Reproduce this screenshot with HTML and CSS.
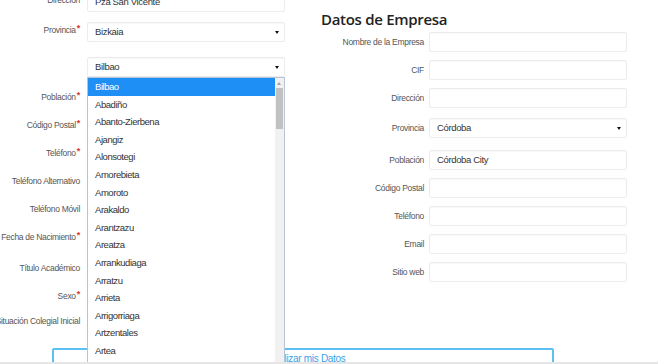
FILE: index.html
```html
<!DOCTYPE html>
<html>
    <head>
        <meta charset='UTF-8'>
        <link rel="stylesheet" href="styles.css">
    </head>
    <body>
        <div class="page">
            <div class="columns">
                <div class="col col-left">
                    <div class="row row-first">
                        <div class="label">Dirección</div>
                        <div class="control">Pza San Vicente</div>
                    </div>
                    <div class="row row-tall">
                        <div class="label">Provincia<span class="req">*</span></div>
                        <div class="control select">Bizkaia</div>
                    </div>
                    <div class="row row-mid">
                        <div class="label"></div>
                        <div class="control select">Bilbao</div>
                    </div>
                    <div class="row">
                        <div class="label">Población<span class="req">*</span></div>
                        <div class="control"></div>
                    </div>
                    <div class="row">
                        <div class="label">Código Postal<span class="req">*</span></div>
                        <div class="control"></div>
                    </div>
                    <div class="row">
                        <div class="label">Teléfono<span class="req">*</span></div>
                        <div class="control"></div>
                    </div>
                    <div class="row">
                        <div class="label">Teléfono Alternativo</div>
                        <div class="control"></div>
                    </div>
                    <div class="row">
                        <div class="label">Teléfono Móvil</div>
                        <div class="control"></div>
                    </div>
                    <div class="row row-31">
                        <div class="label">Fecha de Nacimiento<span class="req">*</span></div>
                        <div class="control"></div>
                    </div>
                    <div class="row">
                        <div class="label">Título Académico</div>
                        <div class="control"></div>
                    </div>
                    <div class="row row-25">
                        <div class="label">Sexo<span class="req">*</span></div>
                        <div class="control"></div>
                    </div>
                    <div class="row">
                        <div class="label">Situación Colegial Inicial</div>
                        <div class="control"></div>
                    </div>
                </div>

                <div class="col col-right">
                    <h2>Datos de Empresa</h2>
                    <div class="row">
                        <div class="label">Nombre de la Empresa</div>
                        <div class="control"></div>
                    </div>
                    <div class="row">
                        <div class="label">CIF</div>
                        <div class="control"></div>
                    </div>
                    <div class="row row-30">
                        <div class="label">Dirección</div>
                        <div class="control"></div>
                    </div>
                    <div class="row row-32">
                        <div class="label">Provincia</div>
                        <div class="control select">Córdoba</div>
                    </div>
                    <div class="row">
                        <div class="label">Población</div>
                        <div class="control">Córdoba City</div>
                    </div>
                    <div class="row">
                        <div class="label">Código Postal</div>
                        <div class="control"></div>
                    </div>
                    <div class="row">
                        <div class="label">Teléfono</div>
                        <div class="control"></div>
                    </div>
                    <div class="row">
                        <div class="label">Email</div>
                        <div class="control"></div>
                    </div>
                    <div class="row">
                        <div class="label">Sitio web</div>
                        <div class="control"></div>
                    </div>
                </div>
            </div>

            <div class="btn">Actualizar mis Datos</div>

            <div class="dropdown">
                <ul class="options">
                    <li class="selected">Bilbao</li>
                    <li>Abadiño</li>
                    <li>Abanto-Zierbena</li>
                    <li>Ajangiz</li>
                    <li>Alonsotegi</li>
                    <li>Amorebieta</li>
                    <li>Amoroto</li>
                    <li>Arakaldo</li>
                    <li>Arantzazu</li>
                    <li>Areatza</li>
                    <li>Arrankudiaga</li>
                    <li>Arratzu</li>
                    <li>Arrieta</li>
                    <li>Arrigorriaga</li>
                    <li>Artzentales</li>
                    <li>Artea</li>
                    <li>Atxondo</li>
                </ul>
                <div class="scrollbar">
                    <div class="arrow"></div>
                    <div class="thumb"></div>
                </div>
            </div>
        </div>
        <div class="bottom-edge"></div>
    </body>
</html>
```

FILE: styles.css
```css
html, body {
    width: 100%;
    height: 100%;
    overflow: hidden;
}

body {
    margin: 0;
    padding: 0;
    background: #fff;
    font-family: "Liberation Sans", Arial, sans-serif;
    color: #555;
}

.page {
    position: relative;
}

.columns {
    display: flex;
    gap: 36px;
}

.col-left {
    margin-top: -12px;
}

.col-right {
    padding-top: 10px;
}

h2 {
    margin: 0;
    height: 18px;
    font-family: "Open Sans", sans-serif;
    font-weight: 600;
    font-size: 15px;
    line-height: 18px;
    letter-spacing: -0.3px;
    color: #222;
}

.row {
    display: flex;
    align-items: flex-start;
    height: 28px;
    padding-top: 4px;
    box-sizing: border-box;
}

.row-first { height: 30px; }
.row-tall { height: 35px; }
.row-mid { height: 32px; }
.row-25 { height: 25px; }
.row-30 { height: 30px; }
.row-31 { height: 31px; }
.row-32 { height: 32px; }

.label {
    flex: none;
    display: flex;
    justify-content: flex-end;
    margin-top: 2px;
    font-size: 8.5px;
    line-height: 12px;
    letter-spacing: -0.3px;
    white-space: nowrap;
}

.col-left .label {
    width: 80px;
    margin-right: 7px;
}

.col-right .label {
    width: 103px;
    margin-right: 5px;
    margin-top: 4px;
}

.label .req {
    color: #e0322d;
    font-size: 9px;
    font-weight: bold;
    line-height: 8px;
    margin-left: 1px;
}

.control {
    position: relative;
    width: 198px;
    height: 20px;
    box-sizing: border-box;
    padding: 0 7px;
    border: 1px solid #ececec;
    border-radius: 2px;
    background: #fff;
    box-shadow: inset 0 1px 1px rgba(0, 0, 0, .03);
    font-size: 9.5px;
    line-height: 18px;
    letter-spacing: -0.35px;
    color: #333;
}

.select::after {
    content: '';
    position: absolute;
    right: 5px;
    top: 8px;
    border-left: 2px solid transparent;
    border-right: 2px solid transparent;
    border-top: 3px solid #111;
}

.btn {
    width: 502px;
    height: 30px;
    margin: 11px 0 0 52px;
    box-sizing: border-box;
    padding-top: 3px;
    border: 2px solid #5cc0f2;
    border-radius: 2px;
    text-align: center;
    font-size: 10px;
    line-height: 12px;
    letter-spacing: -0.3px;
    color: #3c9fe6;
}

.dropdown {
    position: absolute;
    left: 87px;
    top: 77px;
    width: 198px;
    height: 300px;
    box-sizing: border-box;
    border: 1px solid #b5c4d9;
    border-bottom: none;
    background: #fff;
    display: flex;
    overflow: hidden;
}

.options {
    flex: 1;
    margin: 0;
    padding: 0;
    list-style: none;
}

.options li {
    height: 17.6px;
    padding-left: 7px;
    font-size: 9.5px;
    line-height: 17.6px;
    letter-spacing: -0.45px;
    color: #333;
}

.options li.selected {
    background: #1e8ff5;
    color: #fff;
}

.scrollbar {
    width: 9px;
    background: #f1f1f1;
    position: relative;
}

.scrollbar .arrow {
    position: absolute;
    left: 2px;
    top: 4px;
    border-left: 2.5px solid transparent;
    border-right: 2.5px solid transparent;
    border-bottom: 3px solid #a3a3a3;
}

.scrollbar .thumb {
    position: absolute;
    left: 1px;
    right: 1px;
    top: 10px;
    height: 41px;
    background: #c1c1c1;
}

.bottom-edge {
    position: fixed;
    left: 0;
    right: 0;
    bottom: 0;
    height: 2px;
    background: #e6e6e6;
}
```
